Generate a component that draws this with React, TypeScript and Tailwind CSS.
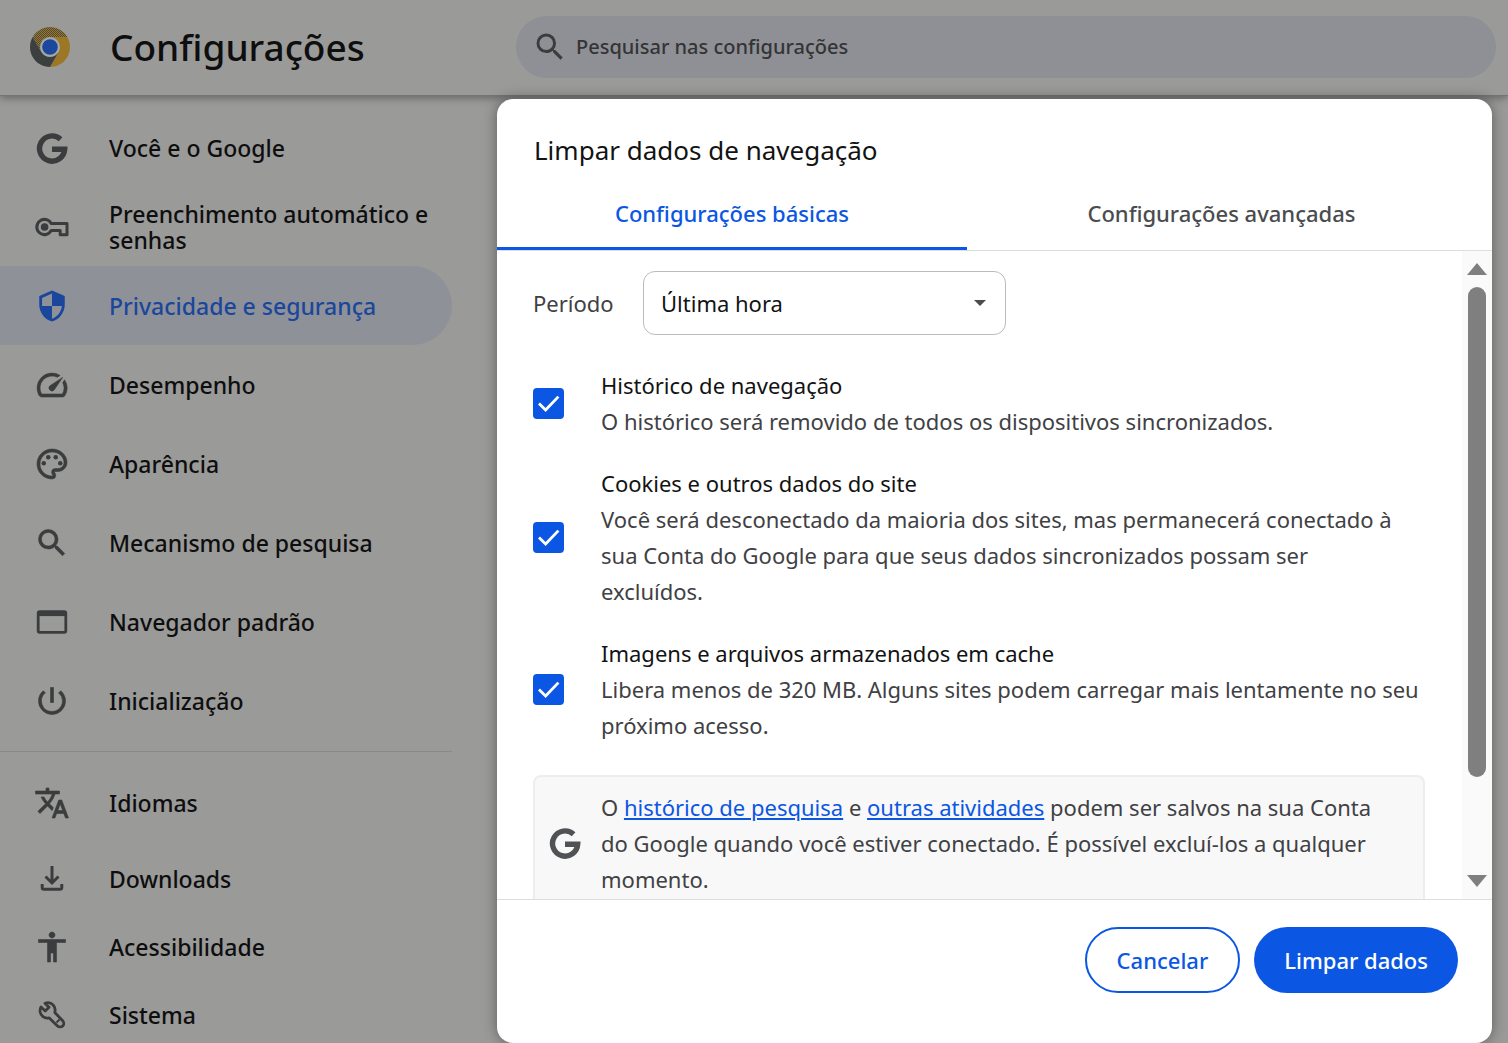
import { useState } from 'react';
import type { ReactNode } from 'react';
import {
  MdAccessibility,
  MdOutlinePalette,
  MdOutlineSpeed,
  MdPowerSettingsNew,
  MdSearch,
  MdSecurity,
  MdTranslate,
} from 'react-icons/md';

interface NavEntry {
  label: string;
  icon: ReactNode;
  active?: boolean;
}

interface DataType {
  id: string;
  title: string;
  description: string;
}

// The first path of these icons is an empty frame, so only the others get thicker
const BOLD_ICON = 'size-9 [&>path:not(:first-child)]:stroke-[0.4]';

const MAIN_ENTRIES: NavEntry[] = [
  { label: 'Você e o Google', icon: <GoogleIcon /> },
  { label: 'Preenchimento automático e senhas', icon: <KeyIcon /> },
  { label: 'Privacidade e segurança', icon: <MdSecurity className="size-[34px]" />, active: true },
  { label: 'Desempenho', icon: <MdOutlineSpeed className={BOLD_ICON} /> },
  { label: 'Aparência', icon: <MdOutlinePalette className={BOLD_ICON} /> },
  { label: 'Mecanismo de pesquisa', icon: <MdSearch className={BOLD_ICON} /> },
  { label: 'Navegador padrão', icon: <WindowIcon /> },
  { label: 'Inicialização', icon: <MdPowerSettingsNew className={BOLD_ICON} /> },
];

const LANGUAGE_ENTRIES: NavEntry[] = [
  { label: 'Idiomas', icon: <MdTranslate className={BOLD_ICON} /> },
];

const SYSTEM_ENTRIES: NavEntry[] = [
  { label: 'Downloads', icon: <DownloadIcon /> },
  { label: 'Acessibilidade', icon: <MdAccessibility className={BOLD_ICON} /> },
  { label: 'Sistema', icon: <WrenchIcon /> },
];

const DATA_TYPES: DataType[] = [
  {
    id: 'history',
    title: 'Histórico de navegação',
    description: 'O histórico será removido de todos os dispositivos sincronizados.',
  },
  {
    id: 'cookies',
    title: 'Cookies e outros dados do site',
    description:
      'Você será desconectado da maioria dos sites, mas permanecerá conectado à sua Conta do Google para que seus dados sincronizados possam ser\nexcluídos.',
  },
  {
    id: 'cache',
    title: 'Imagens e arquivos armazenados em cache',
    description:
      'Libera menos de 320 MB. Alguns sites podem carregar mais lentamente no seu próximo acesso.',
  },
];

function ChromeLogo() {
  return (
    <svg viewBox="0 0 48 48" className="size-10 shrink-0" aria-hidden="true">
      <defs>
        <pattern id="weave" width="2.4" height="2.4" patternUnits="userSpaceOnUse">
          <rect width="2.4" height="2.4" fill="#4d4a40" />
          <rect width="1.2" height="1.2" fill="#9a7526" />
          <rect x="1.2" y="1.2" width="1.2" height="1.2" fill="#9a7526" />
        </pattern>
      </defs>
      <path d="M3.22 12A24 24 0 0 1 44.78 12H24A12 12 0 0 0 13.61 30Z" fill="url(#weave)" />
      <path d="M44.78 12A24 24 0 0 1 24 48L34.39 30A12 12 0 0 0 24 12Z" fill="#9c7826" />
      <path d="M24 48A24 24 0 0 1 3.22 12L13.61 30A12 12 0 0 0 34.39 30Z" fill="#3b3f40" />
      <circle cx="24" cy="24" r="11.5" fill="#a9a9a9" />
      <circle cx="24" cy="24" r="9.4" fill="#1b479c" />
    </svg>
  );
}

function GoogleIcon() {
  return (
    <svg viewBox="0 0 32 32" className="size-8" fill="none" stroke="currentColor" aria-hidden="true">
      <path d="M24.6 7.2A12.6 12.6 0 1 0 28.7 17.2H16" strokeWidth="5.4" />
    </svg>
  );
}

function KeyIcon() {
  return (
    <svg viewBox="0 0 36 36" className="size-9" fill="none" stroke="currentColor" aria-hidden="true">
      <path
        d="M17.2 14.6A7.6 7.6 0 1 0 17.2 21.4H26.2V25.8H33V14.6Z"
        strokeWidth="3"
        strokeLinejoin="round"
      />
      <circle cx="10.6" cy="18" r="3.8" fill="currentColor" stroke="none" />
    </svg>
  );
}

function WindowIcon() {
  return (
    <svg viewBox="0 0 36 36" className="size-9" fill="none" stroke="currentColor" aria-hidden="true">
      <rect x="4.2" y="7.7" width="27.6" height="20.6" rx="1.5" strokeWidth="2.8" />
      <path d="M4 9.8H32" strokeWidth="4.6" />
    </svg>
  );
}

function DownloadIcon() {
  return (
    <svg viewBox="0 0 36 36" className="size-9" fill="none" stroke="currentColor" aria-hidden="true">
      <path
        d="M18 5V22M11.5 15.5L18 22L24.5 15.5M8.2 23V26.5Q8.2 28.2 10 28.2H26Q27.8 28.2 27.8 26.5V23"
        strokeWidth="3"
      />
    </svg>
  );
}

function WrenchIcon() {
  return (
    <svg viewBox="0 0 36 36" className="size-9" fill="none" stroke="currentColor" aria-hidden="true">
      <path
        d="M11 6.2L15 10.2L11.2 14L7 10C5.2 13.5 6 17.5 9 19.7C10.8 21 13 21.3 15 20.8L23.5 28.9C25 30.3 27.3 30.3 28.7 28.9C30.1 27.5 30.1 25.3 28.7 23.8L20.8 15.5C21.5 13 21 10.3 19.3 8.2C17.2 5.8 13.8 5.2 11 6.2Z"
        strokeWidth="2.8"
        strokeLinejoin="round"
      />
      <path d="M22.5 25.5L25.5 22.5" strokeWidth="2" />
    </svg>
  );
}

function NavList({ entries, rowClass }: { entries: NavEntry[]; rowClass: string }) {
  return (
    <ul>
      {entries.map((entry) => (
        <li key={entry.label}>
          <a
            href="#"
            aria-current={entry.active ? 'page' : undefined}
            className={`flex items-center gap-[39px] pl-[34px] ${rowClass} ${
              entry.active ? 'rounded-r-full bg-[#8f9199] text-[#1a479b]' : 'text-[#0e0e0f]'
            }`}
          >
            <span
              className={`flex w-9 shrink-0 justify-center ${
                entry.active ? 'text-[#1a479b]' : 'text-[#3b3c3d]'
              }`}
            >
              {entry.icon}
            </span>
            <span className="text-[23px] leading-[26px] font-medium">{entry.label}</span>
          </a>
        </li>
      ))}
    </ul>
  );
}

function DataTypeRow({ item }: { item: DataType }) {
  const [checked, setChecked] = useState(true);

  return (
    <label htmlFor={item.id} className="flex items-center gap-[37px]">
      <span className="grid size-[31px] shrink-0 place-items-center">
        <input
          id={item.id}
          type="checkbox"
          checked={checked}
          onChange={(e) => setChecked(e.target.checked)}
          className="peer col-start-1 row-start-1 size-full appearance-none rounded-[4px] border-2 border-[#5f6368] checked:border-[#0b57e3] checked:bg-[#0b57e3]"
        />
        <svg
          viewBox="0 0 31 31"
          className="pointer-events-none invisible col-start-1 row-start-1 size-full peer-checked:visible"
          fill="none"
          stroke="#fff"
          strokeWidth="2.8"
          aria-hidden="true"
        >
          <path d="M6 15.6L12.6 22L25.4 8.6" />
        </svg>
      </span>
      <span className="text-[22px] leading-9">
        <span className="block text-[#121314]">{item.title}</span>
        <span className="block whitespace-pre-line text-[#3f4144]">{item.description}</span>
      </span>
    </label>
  );
}

function ClearDataDialog() {
  return (
    <section
      role="dialog"
      aria-labelledby="dialog-title"
      className="mt-[3px] mr-4 flex min-w-0 flex-1 flex-col overflow-hidden rounded-2xl bg-white shadow-[0_0_14px_rgba(0,0,0,0.4)]"
    >
      <h2 id="dialog-title" className="px-[37px] pt-[31px] pb-[9px] text-[26px] leading-10 text-[#121314]">
        Limpar dados de navegação
      </h2>

      <div role="tablist" className="flex h-18 shrink-0 border-b border-[#dcdee6] pr-4">
        <button
          type="button"
          role="tab"
          aria-selected="true"
          className="w-[48%] border-b-3 border-[#0b57e3] text-[22px] font-medium text-[#0b57e3]"
        >
          Configurações básicas
        </button>
        <button
          type="button"
          role="tab"
          aria-selected="false"
          className="flex-1 border-b-3 border-transparent text-[22px] font-medium text-[#4a4c4f]"
        >
          Configurações avançadas
        </button>
      </div>

      <div className="flex min-h-0 flex-1">
        <div className="min-w-0 flex-1 overflow-hidden pt-5 pr-[37px] pl-9">
          <div className="mb-8 flex items-center">
            <label htmlFor="period" className="w-[110px] text-[22px] text-[#3f4144]">
              Período
            </label>
            <div className="grid w-[363px] items-center">
              <select
                id="period"
                defaultValue="hour"
                className="col-start-1 row-start-1 h-16 w-full appearance-none rounded-xl border border-[#b9bbc1] bg-white px-[17px] text-[22px] text-[#121314]"
              >
                <option value="hour">Última hora</option>
                <option value="day">Últimas 24 horas</option>
                <option value="week">Últimos 7 dias</option>
                <option value="all">Todo o período</option>
              </select>
              <svg
                viewBox="0 0 12 6"
                className="pointer-events-none col-start-1 row-start-1 mr-5 h-[6px] w-3 justify-self-end"
                aria-hidden="true"
              >
                <path d="M0 0H12L6 6Z" fill="#4a4c4f" />
              </svg>
            </div>
          </div>

          <div className="space-y-[26px]">
            {DATA_TYPES.map((item) => (
              <DataTypeRow key={item.id} item={item} />
            ))}
          </div>

          <div className="mt-8 flex items-center gap-5 rounded-lg border-2 border-[#ededee] bg-[#f8f8f8] pt-3 pr-8 pb-4 pl-3.5">
            <span className="shrink-0 text-[#505255]">
              <GoogleIcon />
            </span>
            <p className="text-[22px] leading-9 text-[#3f4144]">
              O{' '}
              <a href="#" className="text-[#0b57e3] underline decoration-2 underline-offset-2">
                histórico de pesquisa
              </a>{' '}
              e{' '}
              <a href="#" className="text-[#0b57e3] underline decoration-2 underline-offset-2">
                outras atividades
              </a>{' '}
              podem ser salvos na sua Conta do Google quando você estiver conectado. É possível
              excluí-los a qualquer momento.
            </p>
          </div>
        </div>

        <div className="flex w-[30px] shrink-0 flex-col items-center bg-[#fafafa] py-3" aria-hidden="true">
          <svg viewBox="0 0 20 12" className="h-3 w-5 shrink-0">
            <path d="M10 0L20 12H0Z" fill="#7f7f7f" />
          </svg>
          <div className="my-3 min-h-0 w-[18px] flex-1">
            <div className="h-[85%] rounded-full bg-[#7f7f7f]" />
          </div>
          <svg viewBox="0 0 20 12" className="h-3 w-5 shrink-0">
            <path d="M0 0H20L10 12Z" fill="#7f7f7f" />
          </svg>
        </div>
      </div>

      <div className="flex shrink-0 justify-end gap-3.5 border-t border-[#dcdee6] pt-[27px] pr-[34px] pb-[50px]">
        <button
          type="button"
          className="h-[66px] rounded-full border-2 border-[#0b57e3] px-[30px] text-[22px] font-medium text-[#0b57e3]"
        >
          Cancelar
        </button>
        <button
          type="button"
          className="h-[66px] rounded-full bg-[#0b57e3] px-[30px] text-[22px] font-medium text-white"
        >
          Limpar dados
        </button>
      </div>
    </section>
  );
}

export default function App() {
  return (
    <div className="flex h-screen flex-col overflow-hidden bg-[#9a9a99] font-['Noto_Sans','Open_Sans',sans-serif]">
      <header className="flex h-24 shrink-0 items-center border-b border-[#747474] pr-3 pb-0.5 shadow-[0_2px_8px_rgba(0,0,0,0.35)]">
        <div className="flex w-[516px] shrink-0 items-center gap-10 pl-[30px]">
          <ChromeLogo />
          <h1 className="text-[37px] leading-12 font-medium text-[#0e0e0f]">Configurações</h1>
        </div>
        <label
          htmlFor="settings-search"
          className="flex h-[62px] min-w-0 flex-1 items-center gap-2 rounded-full bg-[#8f9096] pl-4"
        >
          <MdSearch className="size-9 shrink-0 text-[#3b3c3d]" />
          <input
            id="settings-search"
            type="text"
            placeholder="Pesquisar nas configurações"
            className="min-w-0 flex-1 bg-transparent text-[20px] font-medium text-[#2b2c2d] outline-none placeholder:text-[#333435]"
          />
        </label>
      </header>

      <main className="flex min-h-0 flex-1">
        <nav className="w-[497px] shrink-0 overflow-hidden pt-3 pr-[45px]">
          <NavList entries={MAIN_ENTRIES} rowClass="h-[79px]" />
          <hr className="mt-[11px] mb-[17px] border-[#8a8a8b]" />
          <div className="space-y-2">
            <NavList entries={LANGUAGE_ENTRIES} rowClass="h-[68px]" />
            <NavList entries={SYSTEM_ENTRIES} rowClass="h-[68px]" />
          </div>
        </nav>
        <ClearDataDialog />
      </main>
    </div>
  );
}
